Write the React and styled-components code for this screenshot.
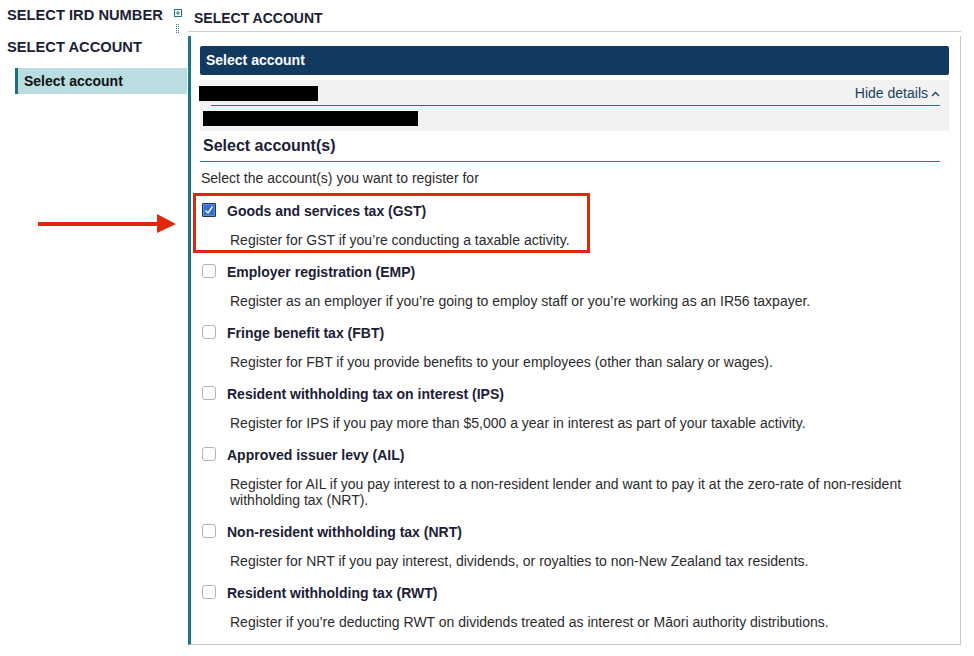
import React from 'react';
import styled, { createGlobalStyle } from 'styled-components';

const GlobalStyle = createGlobalStyle`
  html, body { margin: 0; padding: 0; background: #fff; }
  body { font-family: "Liberation Sans", Arial, sans-serif; color: #1c2035; }
`;

const accounts = [
  { title: 'Goods and services tax (GST)', text: 'Register for GST if you’re conducting a taxable activity.', checked: true },
  { title: 'Employer registration (EMP)', text: 'Register as an employer if you’re going to employ staff or you’re working as an IR56 taxpayer.' },
  { title: 'Fringe benefit tax (FBT)', text: 'Register for FBT if you provide benefits to your employees (other than salary or wages).' },
  { title: 'Resident withholding tax on interest (IPS)', text: 'Register for IPS if you pay more than $5,000 a year in interest as part of your taxable activity.' },
  { title: 'Approved issuer levy (AIL)', text: 'Register for AIL if you pay interest to a non-resident lender and want to pay it at the zero-rate of non-resident withholding tax (NRT).' },
  { title: 'Non-resident withholding tax (NRT)', text: 'Register for NRT if you pay interest, dividends, or royalties to non-New Zealand tax residents.' },
  { title: 'Resident withholding tax (RWT)', text: 'Register if you’re deducting RWT on dividends treated as interest or Māori authority distributions.' },
];

const App = () => {
  return (
    <Page>
      <GlobalStyle />
      <Sidebar>
        <SideHeading>
          <span>SELECT IRD NUMBER</span>
          <SideTools>
            <svg width="8" height="8" viewBox="0 0 8 8">
              <rect x="0.5" y="0.5" width="7" height="7" fill="none" stroke="#1a7a80" />
              <path d="M2 4h4M4 2v4" stroke="#1a7a80" strokeWidth="1" />
            </svg>
            <svg width="4" height="10" viewBox="0 0 4 10">
              {[0, 2, 4, 6, 8].map((y) => (
                <g key={y} fill="#2a8a90">
                  <rect x="0" y={y} width="1" height="1" />
                  <rect x="2" y={y} width="1" height="1" />
                </g>
              ))}
            </svg>
          </SideTools>
        </SideHeading>
        <SideHeading $second>SELECT ACCOUNT</SideHeading>
        <SideItem>Select account</SideItem>
      </Sidebar>

      <Main>
        <MainTitle>SELECT ACCOUNT</MainTitle>
        <Panel>
          <Bar>Select account</Bar>
          <Details>
            <DetailsTop>
              <Redacted $w={119} $shift={-1} />
              <HideLink>
                Hide details
                <svg width="9" height="6" viewBox="0 0 9 6">
                  <polyline points="1,5 4.5,1.5 8,5" fill="none" stroke="#1b3f63" strokeWidth="1.3" />
                </svg>
              </HideLink>
            </DetailsTop>
            <DetailsBottom>
              <Redacted $w={215} $shift={3} />
            </DetailsBottom>
          </Details>

          <SectionHeading>Select account(s)</SectionHeading>
          <Intro>Select the account(s) you want to register for</Intro>

          <List>
            {accounts.map((a) => (
              <Item key={a.title}>
                {a.checked && <Highlight />}
                <LabelRow>
                  <Box $checked={a.checked}>
                    {a.checked && (
                      <svg width="10" height="10" viewBox="0 0 10 10">
                        <polyline points="1.5,5.5 4,8 8.5,1.5" fill="none" stroke="#fff" strokeWidth="1.4" />
                      </svg>
                    )}
                  </Box>
                  <Label>{a.title}</Label>
                </LabelRow>
                <Desc>{a.text}</Desc>
              </Item>
            ))}
          </List>
        </Panel>
      </Main>

      <Arrow width="140" height="20" viewBox="0 0 140 20">
        <rect x="0" y="8" width="122" height="4" fill="#e0260f" />
        <polygon points="119,0 138,10 119,19" fill="#e0260f" />
      </Arrow>
    </Page>
  );
};

const Page = styled.div`
  position: relative;
  display: flex;
  width: 974px;
  min-height: 656px;
`;

const Sidebar = styled.div`
  width: 188px;
  flex-shrink: 0;
  padding-top: 6px;
`;

const SideHeading = styled.div`
  display: flex;
  align-items: flex-start;
  justify-content: space-between;
  padding-left: 7px;
  font-size: 14.7px;
  font-weight: 700;
  line-height: 18px;
  color: #1c2035;
  margin-top: ${(p) => (p.$second ? '14px' : '0')};
`;

const SideTools = styled.div`
  display: flex;
  flex-direction: column;
  align-items: center;
  gap: 7px;
  margin-right: 6px;
  margin-top: 3px;
  height: 0;
  svg { flex-shrink: 0; display: block; }
`;

const SideItem = styled.div`
  margin: 12px 1px 0 15px;
  height: 26px;
  line-height: 26px;
  padding-left: 6px;
  border-left: 3px solid #1f6e7a;
  background: #b9dde0;
  font-size: 14px;
  font-weight: 700;
  color: #111;
`;

const Main = styled.div`
  width: 773px;
  display: flex;
  flex-direction: column;
`;

const MainTitle = styled.div`
  height: 31px;
  line-height: 36px;
  padding-left: 6px;
  border-bottom: 1px solid #cfcfcf;
  font-size: 14px;
  font-weight: 700;
  color: #1c2035;
`;

const Panel = styled.div`
  margin-top: 4px;
  padding: 10px 11px 14px 10px;
  border-left: 3px solid #1a7a80;
  border-right: 1px solid #c8c8c8;
  border-bottom: 1px solid #c8c8c8;
  display: flex;
  flex-direction: column;
`;

const Bar = styled.div`
  margin-left: -1px;
  height: 29px;
  line-height: 29px;
  padding-left: 6px;
  background: #123a5e;
  border-radius: 2px;
  color: #fff;
  font-size: 14px;
  font-weight: 700;
`;

const Details = styled.div`
  margin: 5px 0 0 -1px;
  background: #f2f2f2;
`;

const DetailsTop = styled.div`
  height: 26px;
  display: flex;
  align-items: center;
  justify-content: space-between;
  margin: 0 9px 0 0;
  position: relative;
  &::after {
    content: '';
    position: absolute;
    left: 11px;
    right: 0;
    bottom: 0;
    height: 1px;
    background: #1a7a80;
  }
`;

const DetailsBottom = styled.div`
  height: 25px;
  display: flex;
  align-items: center;
`;

const Redacted = styled.div`
  width: ${(p) => p.$w}px;
  height: 15px;
  background: #000;
  margin-left: ${(p) => p.$shift}px;
`;

const HideLink = styled.div`
  display: flex;
  align-items: center;
  gap: 3px;
  font-size: 14px;
  color: #1b3f63;
  margin-top: -1px;
  svg { margin-top: 2px; }
`;

const SectionHeading = styled.div`
  margin: 0 9px 0 -1px;
  padding: 6px 0 6px 3px;
  line-height: 18px;
  font-size: 16px;
  font-weight: 700;
  color: #1c2035;
  border-bottom: 1px solid #1a8088;
`;

const Intro = styled.div`
  margin-top: 8px;
  line-height: 16px;
  font-size: 14px;
  color: #2b2b2b;
`;

const List = styled.div`
  display: flex;
  flex-direction: column;
  gap: 15px;
  margin-top: 16px;
  padding-left: 1px;
`;

const Item = styled.div`
  position: relative;
`;

const Highlight = styled.div`
  position: absolute;
  box-sizing: border-box;
  left: -9px;
  top: -9px;
  width: 397px;
  height: 60px;
  border: 3px solid #e0260f;
  pointer-events: none;
`;

const LabelRow = styled.div`
  display: flex;
  align-items: center;
  gap: 11px;
  height: 18px;
`;

const Box = styled.span`
  width: 14px;
  height: 14px;
  box-sizing: border-box;
  flex-shrink: 0;
  display: flex;
  align-items: center;
  justify-content: center;
  border-radius: ${(p) => (p.$checked ? '1px' : '3px')};
  border: 1px solid ${(p) => (p.$checked ? '#1d3552' : '#b3b3b3')};
  background: ${(p) => (p.$checked ? '#2f6fd6' : '#fff')};
  box-shadow: ${(p) => (p.$checked ? 'inset 0 0 0 1px #5b8fe3' : 'none')};
  margin-top: -2px;
`;

const Label = styled.span`
  font-size: 14px;
  font-weight: 700;
  color: #1c2035;
`;

const Desc = styled.div`
  margin-top: 12px;
  padding-left: 28px;
  padding-right: 38px;
  line-height: 16px;
  font-size: 14px;
  color: #2b2b2b;
`;

const Arrow = styled.svg`
  position: absolute;
  left: 38px;
  top: 214px;
`;

export default App;
